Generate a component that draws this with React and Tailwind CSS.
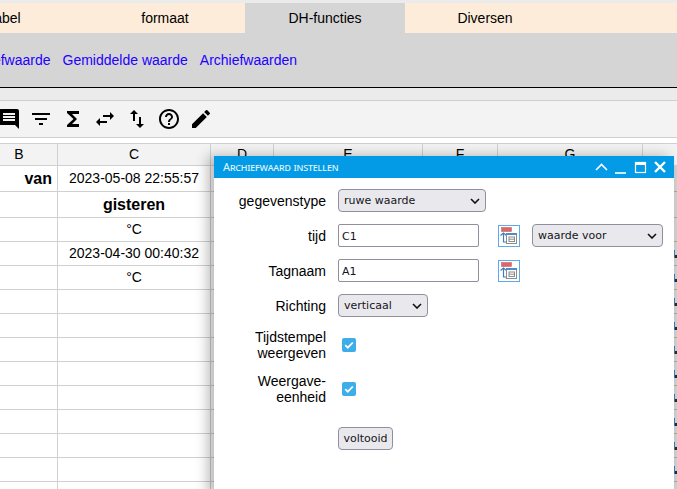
import { MdComment, MdFilterList, MdFunctions, MdSwapHoriz, MdSwapVert, MdHelpOutline, MdEdit } from 'react-icons/md'

const colLines = [
  { label: 'B', w: 'w-[77px] ml-[-19px]' },
  { label: 'C', w: 'w-[153px]' },
  { label: 'D', w: 'w-[63px]' },
  { label: 'E', w: 'w-[149px]' },
  { label: 'F', w: 'w-[75px]' },
  { label: 'G', w: 'w-[145px]' },
  { label: '', w: 'w-[60px]' },
]

const rows = [
  { h: 'h-[26px]', b: 'van', c: '2023-05-08 22:55:57' },
  { h: 'h-[26px]', c: 'gisteren', bold: true },
  { h: 'h-[24px]', c: '°C' },
  { h: 'h-[24px]', c: '2023-04-30 00:40:32', mark: true },
  { h: 'h-[24px]', c: '°C', mark: true },
  ...Array.from({ length: 9 }, () => ({ h: 'h-[24px]', c: '', mark: true })),
]

function Chevron() {
  return (
    <svg className="pointer-events-none absolute right-[6px] top-[9px]" width="10" height="6" viewBox="0 0 10 6" fill="none">
      <path d="M1 1l4 4 4-4" stroke="#111" strokeWidth="1.6" />
    </svg>
  )
}

function Select({ value, w }) {
  return (
    <div className={`relative h-[23px] ${w}`}>
      <select
        defaultValue={value}
        className="h-full w-full appearance-none rounded-[4px] border border-[#8f8f9d] bg-[#e9e9ed] pl-[5px] pt-[2px] font-['DejaVu_Sans'] text-[11px] text-[#15141a] outline-none"
      >
        <option>{value}</option>
      </select>
      <Chevron />
    </div>
  )
}

function TextBox({ value }) {
  return (
    <input
      defaultValue={value}
      className="h-[23px] w-[141px] rounded-[2px] border border-[#8f8f9d] bg-white px-[3px] pt-[2px] font-['DejaVu_Sans'] text-[11px] text-[#15141a] outline-none"
    />
  )
}

function PickIcon() {
  return (
    <svg width="22" height="22" viewBox="0 0 22 22" fill="none">
      <rect x="0.5" y="0.5" width="21" height="21" fill="#fff" stroke="#5ea9ee" />
      <rect x="3.5" y="2.5" width="10" height="4" fill="#d9686c" stroke="#c2575b" strokeWidth="0.5" />
      <path d="M5.5 8v9H8" stroke="#3f7fb5" strokeWidth="1.2" />
      <path d="M2.5 10.5L5.5 8l3 2.5" stroke="#3f7fb5" strokeWidth="1.2" />
      <rect x="8.5" y="8.5" width="10" height="10" fill="#fff" stroke="#8c8c8c" />
      <rect x="8" y="8" width="11" height="2" fill="#4f8cc4" />
      <rect x="11" y="12" width="5.5" height="4.5" fill="#fff" stroke="#8c8c8c" />
      <path d="M11 14.2h5.5" stroke="#8c8c8c" />
    </svg>
  )
}

function CheckBox() {
  return (
    <div className="ml-[4px] flex h-[14px] w-[14px] items-center justify-center rounded-[2px] bg-[#3daee9]">
      <svg width="10" height="10" viewBox="0 0 10 10" fill="none">
        <path d="M1.2 5.2l2.6 2.5 5-5.2" stroke="#fff" strokeWidth="1.8" />
      </svg>
    </div>
  )
}

function Label({ children }) {
  return <div className="w-[112px] text-right text-[14px] leading-[16px] text-black">{children}</div>
}

function Dialog() {
  return (
    <div className="absolute left-[214px] top-[156px] h-[340px] w-[460px] bg-white shadow-[-6px_0_12px_rgba(0,0,0,0.28)]">
      <div className="flex h-[22px] items-center bg-[#039be5] pl-[9px] pr-[3px] text-white">
        <span className="flex-1 font-['Noto_Sans'] text-[11px] tracking-[-0.15px] text-[#e6f5fd] [font-variant:small-caps]">
          Archiefwaard instellen
        </span>
        <svg width="78" height="22" viewBox="0 0 78 22" fill="none" stroke="#fff">
          <path d="M3 14l5.5-5.5L14 14" strokeWidth="1.6" />
          <path d="M22 17h11" strokeWidth="1.6" />
          <rect x="42.5" y="6.5" width="10" height="10" strokeWidth="1.2" />
          <path d="M42 7.5h11" strokeWidth="3" />
          <path d="M62 6l10 10M72 6L62 16" strokeWidth="2.4" />
        </svg>
      </div>

      <div className="flex flex-col pt-[11px]">
        <div className="flex items-center gap-[12px]">
          <Label>gegevenstype</Label>
          <Select value="ruwe waarde" w="w-[148px]" />
        </div>
        <div className="mt-[12px] flex items-center gap-[12px]">
          <Label>tijd</Label>
          <TextBox value="C1" />
          <div className="ml-[7px]">
            <PickIcon />
          </div>
          <Select value="waarde voor" w="w-[131px]" />
        </div>
        <div className="mt-[12px] flex items-center gap-[12px]">
          <Label>Tagnaam</Label>
          <TextBox value="A1" />
          <div className="ml-[7px]">
            <PickIcon />
          </div>
        </div>
        <div className="mt-[12px] flex items-center gap-[12px]">
          <Label>Richting</Label>
          <Select value="verticaal" w="w-[90px]" />
        </div>
        <div className="mt-[12px] flex items-center gap-[12px]">
          <Label>Tijdstempel weergeven</Label>
          <CheckBox />
        </div>
        <div className="mt-[12px] flex items-center gap-[12px]">
          <Label>
            Weergave-
            <br />
            eenheid
          </Label>
          <CheckBox />
        </div>
        <div className="ml-[124px] mt-[22px]">
          <button className="h-[23px] w-[55px] rounded-[4px] border border-[#8f8f9d] bg-[#e9e9ed] pt-[1px] font-['DejaVu_Sans'] text-[11px] text-[#15141a]">
            voltooid
          </button>
        </div>
      </div>
    </div>
  )
}

export default function App() {
  return (
    <div className="relative h-[489px] w-[677px] overflow-hidden bg-white font-['Liberation_Sans',sans-serif] text-[14px] text-black">
      <div className="h-[3px] bg-[#ebebeb]" />

      <div className="flex h-[30px] bg-[#fcecd9]">
        <div className="ml-[-75px] flex w-[160px] items-center justify-center pr-[2px]">Tabel</div>
        <div className="flex w-[160px] items-center justify-center">formaat</div>
        <div className="flex w-[160px] items-center justify-center bg-[#d5d5d5]">DH-functies</div>
        <div className="flex w-[172px] items-center justify-center pr-[12px]">Diversen</div>
      </div>

      <div className="flex h-[55px] items-center gap-[12px] border-b border-black bg-[#d5d5d5] text-[#2200ff]">
        <span className="ml-[-39px]">Archiefwaarde</span>
        <span>Gemiddelde waarde</span>
        <span>Archiefwaarden</span>
      </div>

      <div className="h-[13px] border-b border-[#cfcfcf] bg-[#ebebeb]" />

      <div className="flex h-[37px] items-center gap-[8px] border-b border-[#cfcfcf] bg-[#f3f3f3]">
        <MdComment size={24} className="ml-[-3px]" />
        <MdFilterList size={24} />
        <MdFunctions size={24} />
        <MdSwapHoriz size={24} />
        <MdSwapVert size={24} />
        <MdHelpOutline size={24} />
        <MdEdit size={24} />
      </div>

      <div className="h-[5px] bg-white" />

      <div className="flex h-[23px] border-y border-[#d0d0d0] bg-[#f3f3f3]">
        {colLines.map((col, i) => (
          <div key={i} className={`${col.w} shrink-0 border-r border-[#d0d0d0] text-center leading-[21px]`}>
            {col.label}
          </div>
        ))}
      </div>

      {rows.map((row, i) => (
        <div key={i} className={`flex ${row.h}`}>
          <div className="w-[58px] shrink-0 border-b border-r border-[#d0d0d0] pr-[5px] text-right text-[16px] font-bold leading-[25px]">
            {row.b}
          </div>
          <div
            className={`w-[153px] shrink-0 border-b border-r border-[#d0d0d0] text-center ${
              row.bold ? 'text-[16px] font-bold leading-[25px]' : i === 0 ? 'leading-[25px]' : 'leading-[23px]'
            }`}
          >
            {row.c}
          </div>
          <div className="w-[463px] shrink-0 border-b border-[#d0d0d0]" />
          <div className="flex flex-1 items-center border-b border-[#a8a8a8] bg-[#d2d2d2]">
            {row.mark ? (
              <>
                <div className="h-[8px] w-[1px] bg-[#2f80d0]" />
                <div className="mt-[6px] h-[3px] w-[2px] bg-[#3a2510]" />
              </>
            ) : null}
          </div>
        </div>
      ))}

      <Dialog />
    </div>
  )
}
